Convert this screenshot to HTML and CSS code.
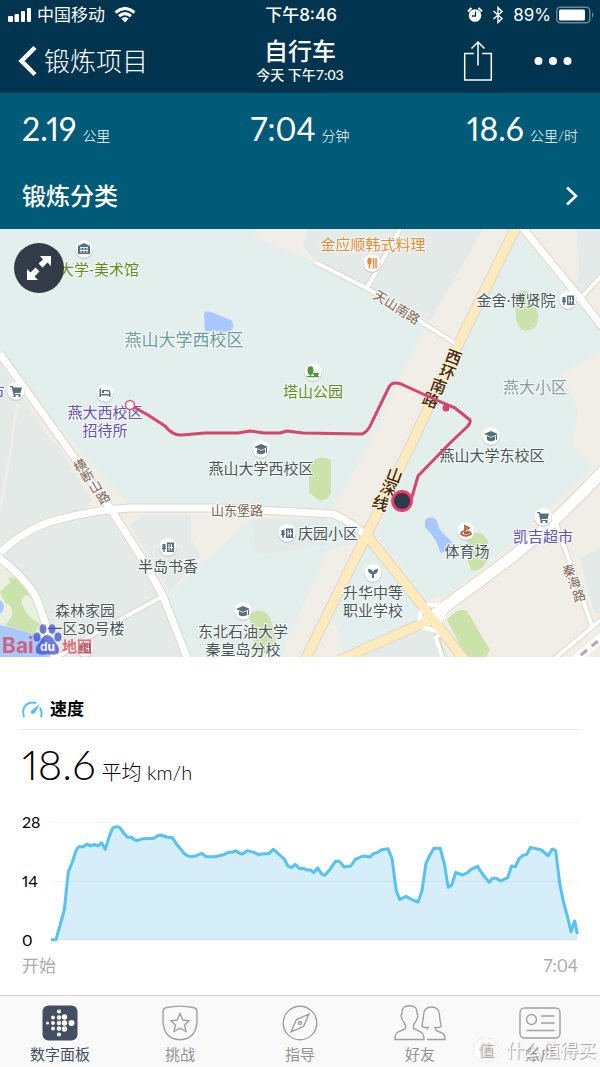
FILE: index.html
```html
<!DOCTYPE html>
<html lang="zh-CN">
<head>
<meta charset="utf-8">
<meta name="viewport" content="width=device-width, initial-scale=1">
<title>自行车</title>
<link rel="stylesheet" href="styles.css">
</head>
<body>
<header class="top">
  <div class="status">
    <div class="status-side">
      <svg class="signal" width="24" height="16" viewBox="0 0 24 16" aria-hidden="true"><rect x="0" y="9" width="5" height="6" rx="1"/><rect x="6.500" y="7" width="4.500" height="8" rx="1"/><rect x="13" y="4" width="4" height="11" rx="1"/><rect x="19" y="1" width="4" height="14" rx="1"/></svg>
      <span>中国移动</span>
      <svg class="wifi" width="22" height="16" viewBox="0 0 22 16" aria-hidden="true"><path d="M1.500 5.500Q11-2.500 20.500 5.500M5 9.200Q11 4 17 9.200" fill="none" stroke="#fff" stroke-width="3"/><path d="M7.300 11.600Q11 8.300 14.700 11.600L11 15.500z"/></svg>
    </div>
    <div class="status-time">下午8:46</div>
    <div class="status-side status-right">
      <svg width="16" height="16" viewBox="0 0 16 16" aria-hidden="true"><circle cx="8" cy="8.500" r="6.300"/><path d="M1 4.500 4.500 1M15 4.500 11.500 1" stroke="#fff" stroke-width="2"/><path d="M8.500 4.500v4.500H5" fill="none" stroke="#01344f" stroke-width="1.300"/></svg>
      <svg class="bluetooth" width="12" height="18" viewBox="0 0 12 18" aria-hidden="true"><path d="M1.500 5 10 12.500 6 16.500V1.500L10 5.500 1.500 13" fill="none" stroke="#fff" stroke-width="1.400"/></svg>
      <span class="percent">89%</span>
      <svg width="38" height="18" viewBox="0 0 38 18" aria-hidden="true"><rect x=".8" y="1.200" width="33" height="15.500" rx="3.500" fill="none" stroke="#6c8796" stroke-width="1.500"/><rect x="3" y="3.500" width="26" height="11" rx="1.500"/><path d="M36 6q3 3 0 6z" fill="#6c8796"/></svg>
    </div>
  </div>
  <nav class="nav">
    <a class="back" href="#"><svg width="20" height="32" viewBox="0 0 20 32" aria-hidden="true"><path d="M17 2.500 3.500 16 17 29.500" fill="none" stroke="#fff" stroke-width="4.500"/></svg><span>锻炼项目</span></a>
    <div class="heading"><h1>自行车</h1><p>今天 下午7:03</p></div>
    <div class="actions">
      <button type="button" aria-label="分享"><svg width="30" height="42" viewBox="0 0 30 42"><path d="M11 13.500H1.700V40h26.600V13.500H19M15 25.500V2M8.500 8.500 15 2l6.500 6.500" fill="none" stroke="#fff" stroke-width="1.500"/></svg></button>
      <button type="button" aria-label="更多"><svg width="38" height="10" viewBox="0 0 38 10"><circle cx="4.500" cy="5" r="4"/><circle cx="19" cy="5" r="4"/><circle cx="33.500" cy="5" r="4"/></svg></button>
    </div>
  </nav>
</header>
<main>
  <section class="summary">
    <div class="stats">
      <p><span class="num">2.19</span><span class="unit">公里</span></p>
      <p><span class="num">7:04</span><span class="unit">分钟</span></p>
      <p><span class="num">18.6</span><span class="unit">公里/时</span></p>
    </div>
    <a class="category" href="#"><span>锻炼分类</span><svg width="14" height="22" viewBox="0 0 14 22" aria-hidden="true"><path d="M3 2.500 12 11 3 19.500" fill="none" stroke="#fff" stroke-width="2.600"/></svg></a>
  </section>
  <section class="map-wrap">
    <svg class="map" viewBox="0 229 600 428" role="img" aria-label="路线地图">
      <defs>
        <g id="pin"><circle cy="1" r="9" fill="#bfc9c8"/><circle r="8.700" fill="#fff"/></g>
        <g id="home"><use href="#pin"/><path d="M-1-4.500H6V5H-1zM-5.500-3h3v4h-3zM-6 1h4v1.200h-1.300V5h-1.400V2.200H-6z"/><path d="M1-3V3.500M3.500-3V3.500M1 .5H5" stroke="#fff"/></g>
        <g id="school"><use href="#pin"/><path d="M0-5 7-2 0 1-7-2zM-4 0 0 1.800 4 0V4Q0 6.500-4 4zM5-1h1v5H5z"/></g>
        <g id="cart"><use href="#pin"/><path d="M-6-5h2.800l.6 1.500H6L4.500 2H-1.500l.3 1H4.500v1H-2.500L-4.200-3.800H-6z"/><circle cx="-1.500" cy="5" r="1.200"/><circle cx="3.500" cy="5" r="1.200"/></g>
      </defs>
      <rect y="229" width="600" height="428" fill="#f1ede7"/>
      <g fill="#e2efed">
        <path d="M0 229H250L258 239 315 262 428 322 400 378 370 443 333 508 130 505 66 434 0 352z"/>
        <path d="M252 519 325 518 385 535 328 550 280 657H188L165 600 200 565z"/>
        <path d="M515 229 600 327V352L557 376Q572 390 578 410L572 445 592 468 507 548 448 594 428 600 376 535 412 443z"/>
        <path d="M370 540 430 605 424 625 345 655 333 616z"/>
      </g>
      <g fill="#e4eae8">
        <path d="M308 229H482L471 250 430 321 315 261 303 246zM576 229H600V277L578 297 575 283 580 275zM0 360 58 446 92 500 85 508 45 519 0 546zM0 553 60 520 108 514 163 602 184 657H58L45 620 30 590 0 562zM130 525 144 515H191V540L200 556 170 592zM253 519 325 518 327 545 256 555zM580 558 600 548V613H594zM340 657 430 628 450 657z"/>
      </g>
      <path d="M0 360 54 443M18 404Q12 430 12 444L0 510" fill="none" stroke="#f1ede7" stroke-width="3"/>
      <path d="M0 569Q28 580 36 608L50 657H0z" fill="#e8f1e0"/>
      <path d="M0 592 18 575Q38 588 39 605L28 595Q14 598 30 617L40 624 34 634 5 625Q20 611 5 602zM8 577 22 581 15 590z" fill="#cbe2ab"/>
      <path d="M0 600Q8 607 0 614zM0 625Q30 631 45 640L52 657H0z" fill="#a9c8ff"/>
      <path d="M204 315Q204 310 211 312L231 320Q237 328 228 332L205 331zM425 520Q430 515 436 519L440 530 452 542 450 551 440 553Q438 540 425 527z" fill="#a9c8ff"/>
      <path d="M514 294Q526 285 532 297L538 314Q540 329 526 331 517 330 516 316zM309 465Q319 453 331 460V492Q328 502 319 500L309 493zM467 538Q480 526 488 541V558Q482 573 471 570L467 558zM447 620Q458 607 467 611L490 650 486 657H466zM249 613Q264 607 270 617L276 641Q268 660 255 650z" fill="#cbe2ab"/>
      <g class="road-edge">
        <path d="M0 354 64 443 110 508 143 560 163 596 188 660M0 553Q25 528 60 519T130 508H220L333 514Q352 522 366 536M-5 555Q20 572 35 595 46 620 55 660" stroke-width="9"/>
        <path d="M518 222 580 298 604 329" stroke-width="9"/><path d="M425 622 450 603 507 561Q555 523 604 470" stroke-width="13"/>
        <path d="M50 662 85 639 163 596M315 262 370 290 458 345M367 288 400 229M580 299 604 273M556 523 592 626M553 660 604 617M436 630 443 660" stroke-width="6"/>
        <path d="M518 223 458 345 412 443 366 536 304 662M367 536 400 577 466 662M340 660 360 651 430 620" stroke-width="11"/>
      </g>
      <g class="road">
        <path d="M0 354 64 443 110 508 143 560 163 596 188 660M0 553Q25 528 60 519T130 508H220L333 514Q352 522 366 536M-5 555Q20 572 35 595 46 620 55 660" stroke-width="7"/>
        <path d="M518 222 580 298 604 329" stroke-width="7"/><path d="M425 622 450 603 507 561Q555 523 604 470" stroke-width="11"/>
        <path d="M420 605H450M419 621 423 604M448 607Q436 625 440 632L418 626M50 662 85 639 163 596M315 262 370 290 458 345M367 288 400 229M580 299 604 273M556 523 592 626M553 660 604 617" stroke-width="4"/><path d="M441 632 436 638 443 660" stroke-width="4"/>
      </g>
      <path d="M570 664 604 636" stroke="#fff" stroke-width="9"/><path d="M570 664 604 636" stroke="#aaa" stroke-width="3" stroke-dasharray="8 6"/>
      <path class="highway" d="M518 223 458 345 412 443 366 536 304 662M367 536 400 577 466 662M340 660 360 651 430 620"/>
      <g fill="#57717c">
        <g transform="translate(84 249)"><use href="#pin"/><path d="M0-6 6-3V5H-6V-3z"/><path d="M-4-1.500H4M-4 1.500H4M-3-2V4M0-2V4M3-2V4" stroke="#fff" stroke-width=".8"/></g>
        <g transform="translate(372 263)" fill="#ee8735"><use href="#pin"/><ellipse cx="-2.500" cy="-2" rx="2.200" ry="3.500"/><path d="M-3.200 0h1.400v5.500h-1.400zM.8-5h1.500V5.500H.8zM3.300-5h1.500V5.500H3.300z"/></g>
        <use href="#home" x="568" y="300"/>
        <g transform="translate(313 372)" fill="#4b9a37"><use href="#pin"/><ellipse cx="-2.500" cy="-1.500" rx="3" ry="4.200"/><path d="M-3.200 2h1.400v3h-1.400zM0 1h6v1.500H5V4h1v1.200H-6V4h7V2.500H0z"/></g>
        <g transform="translate(105 393)"><use href="#pin"/><path d="M-5.500-4.500h1.500V1H4V-1.500L-1-2V0H-3V-3H3Q5.500-3 5.500 0V4H4V2.500H-4V4h-1.500z"/></g>
        <use href="#cart" x="16" y="391"/><use href="#cart" x="543" y="517"/>
        <use href="#school" x="261" y="449"/><use href="#school" x="491" y="436"/><use href="#school" x="243" y="611"/>
        <use href="#home" x="168" y="547"/><use href="#home" x="287" y="533"/>
        <g transform="translate(373 573)"><use href="#pin"/><path d="M-5-4Q0-4 0 0 0-4 5-4 5 1 1 1V5H-1V1Q-5 1-5-4z"/></g>
        <g transform="translate(466 531)" fill="none" stroke="#bc5b3c" stroke-width="1.800"><use href="#pin" stroke="none"/><path d="M-1 1V-5L3-3-1-1M-2 0Q-5 1-5 3 0 6.500 5 3 5 1 1 0M-2 2H3"/></g>
        <use href="#home" x="85" y="648" opacity=".7"/>
      </g>
      <g class="label">
        <text class="green" x="99" y="275">大学-美术馆</text>
        <text class="orange" x="373" y="250">金应顺韩式料理</text>
        <text x="516" y="306">金舍·博贤院</text>
        <text class="district" x="184" y="346">燕山大学西校区</text>
        <text class="area" x="535" y="393">燕大小区</text>
        <text class="green" x="313" y="397">塔山公园</text>
        <text class="purple" x="105" y="418">燕大西校区</text><text class="purple" x="105" y="436">招待所</text>
        <text class="purple" x="-3" y="397">市</text>
        <text x="261" y="474">燕山大学西校区</text><text x="492" y="461">燕山大学东校区</text>
        <text x="328" y="539">庆园小区</text><text x="467" y="557">体育场</text>
        <text class="purple" x="543" y="542">凯吉超市</text><text x="168" y="572">半岛书香</text>
        <text x="373" y="598">升华中等</text><text x="373" y="616">职业学校</text>
        <text x="85" y="616">森林家园</text><text x="86" y="634">一区30号楼</text>
        <text x="243" y="637">东北石油大学</text><text x="243" y="655">秦皇岛分校</text>
        <text class="street" x="237" y="515">山东堡路</text>
        <text class="street" transform="rotate(32 397 307)" x="397" y="312">天山南路</text>
        <text class="street upright" x="77 84 92 100" y="473 483 494 505" rotate="-30">横断山路</text>
        <text class="street upright" x="564 569 574" y="577 589 602" rotate="-15">秦海路</text>
        <text class="trunk upright" x="444 438 429 421" y="360 375 389 403" rotate="20">西环南路</text>
        <text class="trunk upright" x="385 379 371" y="478 491 506" rotate="20">山深线</text>
      </g>
      <path class="route" d="M130 405 148 415 165 426Q173 436 182 435L205 433H238L250 431 264 433H280L287 431 303 433 362 434Q368 432 372 422L389 387Q392 381 401 384L434 399 455 408 470 420Q471 422 468 426L450 443 418 476 414 490 411 500"/>
      <circle cx="446" cy="408" r="3.500" fill="#d8456c"/>
      <circle cx="130" cy="405" r="4.500" fill="#fff" stroke="#e6507a" stroke-width="1.500"/>
      <circle cx="402" cy="501" r="9.500" fill="#2c3a4c" stroke="#f4396f" stroke-width="2.800"/>
      <g class="baidu">
        <text x="2" y="653" fill="#de3b43">Bai</text>
        <g fill="#3944ce"><ellipse cx="37" cy="637" rx="3.500" ry="4.500"/><ellipse cx="43" cy="629" rx="3.500" ry="4.800"/><ellipse cx="52" cy="629" rx="3.500" ry="4.800"/><ellipse cx="58" cy="637" rx="3.500" ry="4.500"/><path d="M47 635Q52 635 55 642 62 650 57 654 52 655 47 654 39 656 36 652 35 646 40 642 43 635 47 635z"/></g>
        <text class="du" x="40" y="651" fill="#fff">du</text>
        <text class="ditu" x="62" y="652" fill="#de3b43">地图</text>
      </g>
    </svg>
    <button class="expand" type="button" aria-label="全屏"><svg width="26" height="26" viewBox="0 0 26 26"><path d="M25 1V11L21.500 7.500 16.500 12.500 12.500 8.500 17 4.500 14 1zM1 25V14L4.500 17.500 9.500 12.500 13.500 16.500 8.500 21.500 12 25z"/></svg></button>
  </section>
  <section class="speed">
    <h2><svg width="21" height="18" viewBox="0 0 21 18" aria-hidden="true"><g fill="none" stroke="#4fc0f5" stroke-width="1.900"><path d="M2 17Q-.5 9 4.500 4.500 8 1.500 14 3M17.800 7.500Q20.500 11 19 17"/></g><path d="M18 4 13 12.500Q11 15 9 13 8 11 10 10z" fill="#4fc0f5"/></svg><span>速度</span></h2>
    <p class="average"><span class="big">18.6</span><span>平均 km/h</span></p>
    <div class="chart">
      <div class="scale"><span>28</span><span>14</span><span>0</span></div>
      <svg class="plot" viewBox="153 390 1584 366" preserveAspectRatio="none" role="img" aria-label="速度图表">
        <path class="fill" d="M153 750V749H168L193 660 205 545 215 522 228 483 238 470H250L262 462 272 468 283 463 294 468 305 458 316 478 328 440 338 415 350 410 362 415 372 430 383 442H395L412 452 430 446 462 445 483 435 500 441 518 443 530 462 555 492 575 500 590 497 606 490 620 500H645L672 494 686 487H698L709 482 728 492 743 482 765 488 777 494 790 491H808L821 478 835 490 854 507 865 528 876 533 887 523 900 536 912 535 922 540H933L943 548 954 534 967 552 976 556 990 540 1008 514H1020L1034 531 1054 528 1068 508 1090 498 1112 501 1122 491 1135 487 1147 479 1166 476 1178 505 1185 560 1191 603 1201 628 1220 619 1236 628 1256 636 1268 603 1280 520 1292 495 1304 475H1323L1335 520 1347 592 1358 584 1369 547 1390 555 1405 548 1414 539 1435 529 1450 552 1470 577 1480 565H1492L1504 573 1526 563 1537 528 1549 530 1560 506 1572 496 1583 493 1594 472 1627 480 1647 497 1660 477 1670 482 1682 580 1693 635 1704 675 1716 725 1727 693 1735 732V750z"/>
        <path class="grid" d="M153 397H1737M153 574H1737M153 750H1737"/>
        <path class="line" d="M153 749H168L193 660 205 545 215 522 228 483Q234 470 238 470H250L262 462 272 468 283 463 294 468 305 458 316 478 328 440 338 415Q342 410 350 410T362 415L372 430 383 442H395Q404 452 412 452L430 446 462 445Q475 435 483 435L500 441 518 443 530 462 555 492Q565 500 575 500L590 497 606 490 620 500H645L672 494 686 487H698L709 482Q720 492 728 492L743 482 765 488 777 494 790 491H808L821 478 835 490 854 507 865 528 876 533 887 523 900 536 912 535 922 540H933L943 548 954 534 967 552 976 556 990 540 1008 514H1020L1034 531 1054 528 1068 508 1090 498 1112 501 1122 491 1135 487 1147 479 1166 476 1178 505 1185 560 1191 603 1201 628 1220 619 1236 628 1256 636 1268 603 1280 520 1292 495 1304 475H1323L1335 520 1347 592 1358 584 1369 547 1390 555 1405 548 1414 539 1435 529 1450 552 1470 577 1480 565H1492L1504 573 1526 563 1537 528 1549 530 1560 506 1572 496 1583 493 1594 472 1627 480 1647 497 1660 477 1670 482 1682 580 1693 635 1704 675 1716 725 1727 693 1735 732"/>
      </svg>
    </div>
    <div class="range"><span>开始</span><span>7:04</span></div>
  </section>
</main>
<footer class="tabs">
  <a class="active" href="#"><svg width="36" height="36" viewBox="0 0 36 36" aria-hidden="true"><rect x=".5" y=".5" width="35" height="35" rx="6" fill="#434f60"/><g fill="#fff"><circle cx="5.500" cy="18" r="1.500"/><circle cx="11" cy="12.500" r="1.900"/><circle cx="11" cy="18" r="1.900"/><circle cx="11" cy="23.500" r="1.900"/><circle cx="17" cy="6.500" r="2.100"/><circle cx="17" cy="12.500" r="2.200"/><circle cx="17" cy="18" r="2.200"/><circle cx="17" cy="23.500" r="2.200"/><circle cx="17" cy="29.500" r="2.100"/><circle cx="22.500" cy="12" r="2.700"/><circle cx="22.500" cy="18" r="2.700"/><circle cx="22.500" cy="24" r="2.700"/><circle cx="29.500" cy="18" r="3"/></g></svg><span>数字面板</span></a>
  <a href="#"><svg width="36" height="36" viewBox="0 0 36 36" aria-hidden="true"><path d="M3.500 2.800Q18-.5 32.500 2.800 35 3.500 35 7V14Q35 31 23 34 18 35.500 13 34 1 31 1 14V7Q1 3.500 3.500 2.800zM18 8.500 20.800 15 27 15.700 22.500 20 24 26.500 18 23.200 12 26.500 13.500 20 9 15.700 15.200 15z"/></svg><span>挑战</span></a>
  <a href="#"><svg width="36" height="36" viewBox="0 0 36 36" aria-hidden="true"><circle cx="18" cy="18" r="16.800"/><path d="M27 9 21.500 21.500 9 27 14.500 14.500z"/><circle cx="18" cy="18" r="1.500"/></svg><span>指导</span></a>
  <a href="#"><svg width="52" height="36" viewBox="0 0 52 36" aria-hidden="true"><path d="M15.500.8Q24 .8 23 9 25 10 22.500 15 21 18 19.500 20V23.500L27 27Q30 29 30 34.500H1Q1 29 4 27L11.500 23.500V20Q10 18 8.500 15 6 10 8 9 7 .8 15.500.8zM33 24.500 34 22.500Q27 23 28 20 29.500 14 29.500 10 30 2 37.500 2T45.500 10Q45.500 14 47 20 48 23 41 22.500L42 25.500 48 28Q51 29 51 34.500H33"/></svg><span>好友</span></a>
  <a href="#"><svg width="42" height="36" viewBox="0 0 42 36" aria-hidden="true"><rect x="1" y="3" width="40" height="30" rx="4.500"/><circle cx="12.500" cy="14.500" r="5"/><path d="M22 11H35.500M22 18H35.500M7.500 25.500H35.500"/></svg><span>账户</span></a>
  <div class="watermark"><span class="seal">值</span><span>什么值得买</span></div>
</footer>
</body>
</html>
```
FILE: styles.css
```css
* { box-sizing: border-box; }
body {
  margin: 0;
  min-height: 100vh;
  display: flex;
  flex-direction: column;
  background: #fff;
  color: #000;
  font-family: Lato, "Noto Sans CJK SC", sans-serif;
  font-variant-numeric: proportional-nums;
}
h1, h2, p { margin: 0; font-weight: 400; }
a { color: inherit; text-decoration: none; }
button { border: 0; padding: 0; background: none; display: flex; cursor: pointer; }
svg { display: block; flex: none; }

.top { background: #01344f; color: #fff; }
.top svg, .expand svg { fill: #fff; }
.status {
  height: 30px;
  padding: 0 6px 0 8px;
  display: grid;
  grid-template-columns: 1fr auto 1fr;
  align-items: center;
  font: 17px/30px Inter, "Noto Sans CJK SC", sans-serif;
}
.status-side { display: flex; align-items: center; gap: 5px; }
.status-side .wifi { margin-left: 4px; }
.status-right { justify-content: flex-end; }
.status-right .bluetooth { margin: 0 4px; }
.status-time { font-weight: 500; }
.nav {
  height: 63px;
  padding: 0 18px 2px;
  display: grid;
  grid-template-columns: 1fr auto 1fr;
  align-items: center;
}
.back { display: flex; align-items: center; gap: 6px; font-size: 26px; line-height: 32px; font-weight: 300; }
.heading { text-align: center; }
.heading h1 { font-size: 24px; line-height: 28px; font-weight: 500; }
.heading p { font: 500 14px/20px Lato, "Noto Sans CJK SC", sans-serif; }
.actions { display: flex; align-items: center; justify-content: flex-end; gap: 41px; padding-right: 10px; }

.summary { height: 136px; padding: 16px 22px 0; background: #005b78; color: #fff; }
.stats { display: grid; grid-template-columns: 1fr auto 1fr; line-height: 40px; }
.stats p:last-child { text-align: right; }
.num { font-size: 32px; }
.unit { margin-left: 6px; font-size: 14px; font-weight: 300; }
.category { margin-top: 20px; display: flex; justify-content: space-between; align-items: center; font-size: 24px; line-height: 40px; font-weight: 500; }

.map-wrap { position: relative; }
.map { width: 100%; height: auto; }
.expand {
  position: absolute;
  top: 14px;
  left: 14px;
  width: 50px;
  height: 50px;
  border-radius: 50%;
  align-items: center;
  justify-content: center;
  background: #333a48;
}
.road-edge, .road { fill: none; stroke-linejoin: round; }
.road-edge { stroke: #ddd7cb; }
.road { stroke: #fff; }
.highway { fill: none; stroke: #feebbd; stroke-width: 9px; stroke-linejoin: round; }
.route { fill: none; stroke: #d8456c; stroke-width: 3px; stroke-linejoin: round; }
.label {
  font: 15px "Noto Sans", "Noto Sans CJK SC", sans-serif;
  fill: #4a5556;
  stroke: #f5f9f8;
  stroke-width: 2px;
  paint-order: stroke;
  text-anchor: middle;
}
.label .green { fill: #638c18; }
.label .orange { fill: #ea8a35; }
.label .purple { fill: #6550b0; }
.label .district { font-size: 17px; fill: #6b9d9e; }
.label .area { font-size: 16px; fill: #8a9d9c; }
.label .street { font-size: 13px; fill: #836453; }
.label .trunk { font-size: 16px; font-weight: 500; fill: #402718; stroke: #fdf0d0; }
.label .upright { text-anchor: start; }
.baidu { font: 700 21px Inter, "Noto Sans CJK SC", sans-serif; opacity: 0.7; }
.baidu .du { font-size: 12px; }
.baidu .ditu { font-size: 15px; }

.speed { padding: 38px 22px 15px; }
.speed h2 {
  display: flex;
  align-items: center;
  gap: 7px;
  padding-bottom: 6px;
  border-bottom: 1px solid #e6e6e6;
  font-size: 17px;
  line-height: 28px;
  font-weight: 700;
}
.average { margin-top: 6px; display: flex; align-items: baseline; gap: 6px; font-size: 20px; line-height: 56px; font-weight: 300; }
.big { font-size: 42px; }
.chart { margin-top: 20px; display: flex; }
.scale { width: 29px; margin: -7px 0; display: flex; flex-direction: column; justify-content: space-between; font-size: 16px; line-height: 18px; }
.plot { flex: 1; min-width: 0; height: 122px; overflow: visible; }
.fill { fill: #d5eefa; }
.grid, .line { fill: none; vector-effect: non-scaling-stroke; }
.grid { stroke: rgba(0, 0, 0, 0.05); stroke-width: 1px; }
.line { stroke: #56c2f3; stroke-width: 3px; stroke-linejoin: round; }
.range { margin-top: 10px; display: flex; justify-content: space-between; color: #aaa; font-size: 17px; line-height: 28px; }

.tabs {
  position: relative;
  margin-top: auto;
  padding: 9px 0 0;
  height: 72px;
  display: grid;
  grid-template-columns: repeat(5, 1fr);
  border-top: 1px solid #d0d0d0;
  background: #f9f9f9;
  color: #929292;
  font-size: 15px;
  line-height: 22px;
}
.tabs a { display: flex; flex-direction: column; align-items: center; gap: 2px; }
.tabs svg { fill: none; stroke: #a0a0a0; stroke-width: 1.4; }
.tabs .active { color: #434f60; }
.tabs .active svg { stroke: none; }
.watermark {
  position: absolute;
  right: 4px;
  bottom: 4px;
  display: flex;
  align-items: center;
  gap: 8px;
  color: #fff;
  font-size: 18px;
  line-height: 26px;
  text-shadow: 1px 1px 1px #999;
}
.seal { width: 24px; height: 24px; border-radius: 50%; background: #fff; color: #ddd; text-align: center; line-height: 24px; font-size: 16px; box-shadow: 0 0 1px #bbb; }
```
